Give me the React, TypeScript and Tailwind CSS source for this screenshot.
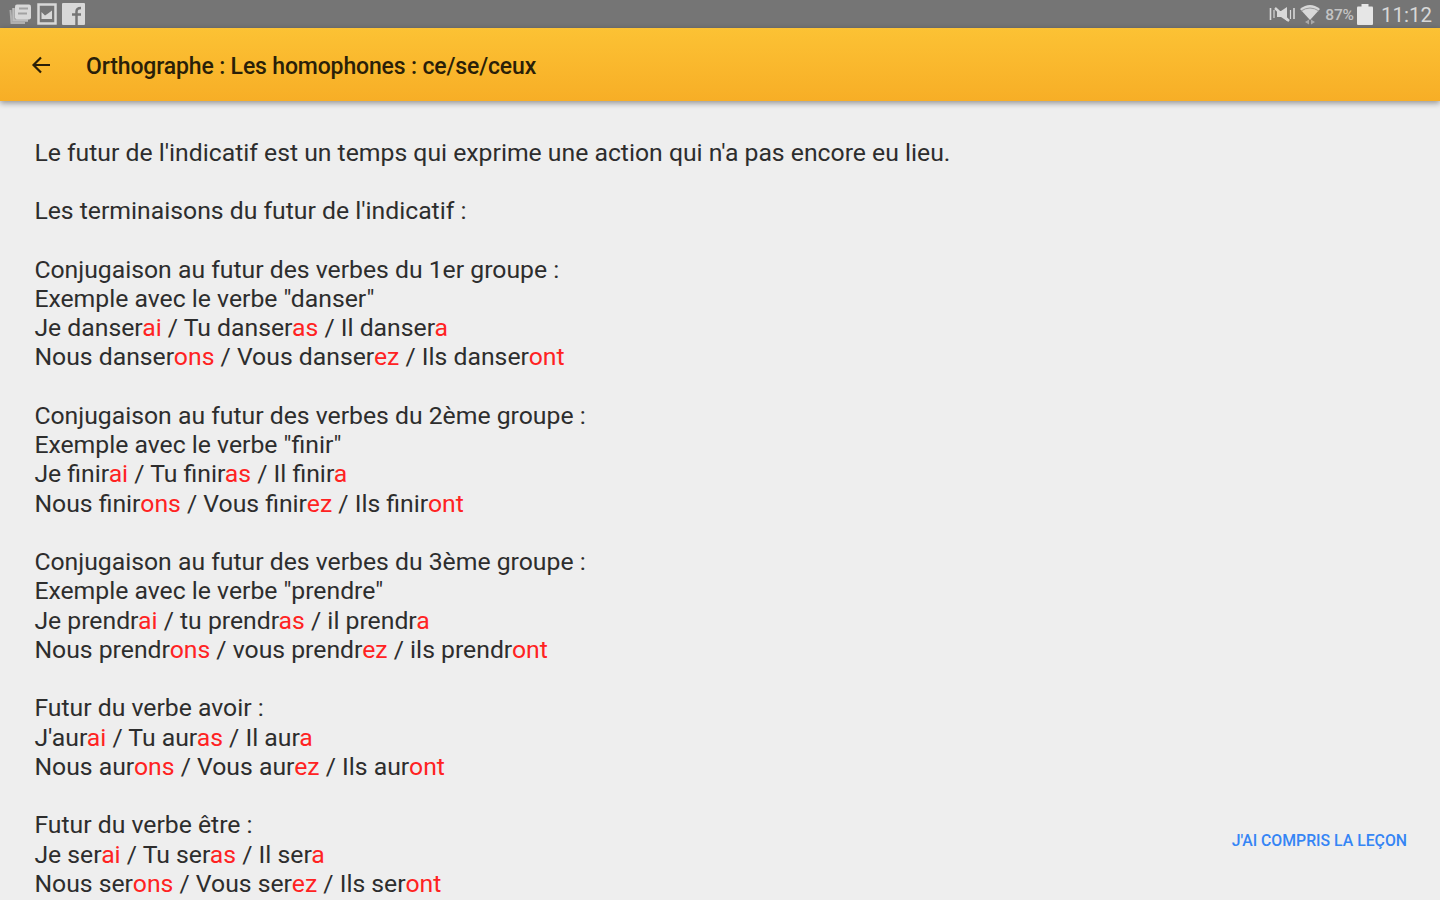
import type { ReactNode } from "react";

type Verb = { title: string; example?: string; rows: [string, string][][] };

const INTRO = [
  "Le futur de l'indicatif est un temps qui exprime une action qui n'a pas encore eu lieu.",
  "Les terminaisons du futur de l'indicatif :",
];

// each form is [stem, ending], the ending is highlighted
const VERBS: Verb[] = [
  {
    title: "Conjugaison au futur des verbes du 1er groupe :",
    example: 'Exemple avec le verbe "danser"',
    rows: [
      [["Je danser", "ai"], ["Tu danser", "as"], ["Il danser", "a"]],
      [["Nous danser", "ons"], ["Vous danser", "ez"], ["Ils danser", "ont"]],
    ],
  },
  {
    title: "Conjugaison au futur des verbes du 2ème groupe :",
    example: 'Exemple avec le verbe "finir"',
    rows: [
      [["Je finir", "ai"], ["Tu finir", "as"], ["Il finir", "a"]],
      [["Nous finir", "ons"], ["Vous finir", "ez"], ["Ils finir", "ont"]],
    ],
  },
  {
    title: "Conjugaison au futur des verbes du 3ème groupe :",
    example: 'Exemple avec le verbe "prendre"',
    rows: [
      [["Je prendr", "ai"], ["tu prendr", "as"], ["il prendr", "a"]],
      [["Nous prendr", "ons"], ["vous prendr", "ez"], ["ils prendr", "ont"]],
    ],
  },
  {
    title: "Futur du verbe avoir :",
    rows: [
      [["J'aur", "ai"], ["Tu aur", "as"], ["Il aur", "a"]],
      [["Nous aur", "ons"], ["Vous aur", "ez"], ["Ils aur", "ont"]],
    ],
  },
  {
    title: "Futur du verbe être :",
    rows: [
      [["Je ser", "ai"], ["Tu ser", "as"], ["Il ser", "a"]],
      [["Nous ser", "ons"], ["Vous ser", "ez"], ["Ils ser", "ont"]],
    ],
  },
];

export default function App() {
  return (
    <div className="relative flex h-[900px] w-[1440px] flex-col overflow-hidden bg-[#eeeeee] font-['Roboto',sans-serif]">
      <StatusBar />
      <header className="z-10 flex h-[72.5px] shrink-0 items-center bg-gradient-to-b from-[#fcc234] to-[#f7ae26] pl-[31px] text-[#2a1f08] shadow-[0_2px_6px_rgba(0,0,0,0.4)]">
        <button aria-label="Retour" className="pt-px">
          <svg width="20" height="20" viewBox="0 0 20 20" fill="none" stroke="currentColor" strokeWidth="2.2">
            <path d="M19 10H3M10 2.5L2.5 10L10 17.5" />
          </svg>
        </button>
        <h1 className="ml-[35px] pt-[5px] text-[23px] font-medium leading-7 tracking-[-0.15px] whitespace-nowrap">
          Orthographe : Les homophones : ce/se/ceux
        </h1>
      </header>

      <main className="flex flex-col gap-[29.25px] pt-[37px] pl-[34.4px] text-[24.76px] leading-[29.25px] whitespace-nowrap text-[#2d2d2d]">
        {INTRO.map((line) => (
          <p key={line}>{line}</p>
        ))}
        {VERBS.map((verb) => (
          <section key={verb.title}>
            <p>{verb.title}</p>
            {verb.example && <p>{verb.example}</p>}
            {verb.rows.map((row, i) => (
              <p key={i}>
                {row.map(([stem, ending], j) => (
                  <span key={stem}>
                    {j > 0 && " / "}
                    {stem}
                    <Ending>{ending}</Ending>
                  </span>
                ))}
              </p>
            ))}
          </section>
        ))}
      </main>

      <button className="absolute right-[33px] bottom-[49px] text-[15.8px] font-medium leading-5 whitespace-nowrap text-[#3585f5]">
        J'AI COMPRIS LA LEÇON
      </button>
    </div>
  );
}

function Ending({ children }: { children: ReactNode }) {
  return <span className="text-[#ff2222]">{children}</span>;
}

function StatusBar() {
  return (
    <div className="flex h-7 shrink-0 items-center justify-between bg-[#757575] pr-[8px] pl-[9px] text-[#d8d8d8]">
      <div className="flex items-center gap-[5px]">
        {/* stacked cards */}
        <svg width="23" height="22" viewBox="0 0 23 22">
          <path d="M1.5 7L2.5 20H16" fill="none" stroke="#b0b0b0" strokeWidth="2" />
          <path d="M4.5 5V17.5H19" fill="none" stroke="#bdbdbd" strokeWidth="2.5" />
          <rect x="6" y="1.5" width="16" height="15" rx="2" fill="currentColor" />
          <path d="M10 5.5H19M9 10.5H18" stroke="#a2a2a2" strokeWidth="1.8" />
        </svg>
        <svg width="20" height="22" viewBox="0 0 20 22">
          <rect x="1.5" y="1.5" width="17" height="19" fill="none" stroke="currentColor" strokeWidth="2.5" />
          <path d="M4.5 16V9L8 12.5L11 10.5L15 7.5V16Z" fill="currentColor" />
        </svg>
        <svg width="23" height="22" viewBox="0 0 23 22">
          <rect width="23" height="22" rx="1" fill="currentColor" />
          <path d="M14.5 22V8.5Q14.5 5 19 5M10 11.5H19" fill="none" stroke="#757575" strokeWidth="2.5" />
        </svg>
      </div>
      <div className="flex items-center whitespace-nowrap">
        {/* vibrate / muted */}
        <svg width="27" height="20" viewBox="0 0 27 20" fill="none" stroke="currentColor">
          <path d="M1.5 4V16M25 4V15" strokeWidth="1.6" />
          <path d="M5 6V14M21.5 6V15" strokeWidth="1.2" />
          <path d="M8 7H12L18 3V17L12 13H8Z" fill="currentColor" stroke="none" />
          <path d="M6 4L20 17" strokeWidth="2.4" />
        </svg>
        <svg className="ml-[4px]" width="20" height="21" viewBox="0 0 20 21">
          <path d="M0 5Q10 -3 20 5L10 16Z" fill="currentColor" />
          <path d="M1 7Q10 1 19 7" fill="none" stroke="#9a9a9a" />
          <path d="M5 18L9 15.5V20.5ZM15 18L11 15.5V20.5Z" fill="#aaaaaa" />
        </svg>
        <span className="ml-[5px] pt-0.5 text-[15.5px] font-medium leading-5 tracking-[-0.1px] text-[#c4c4c4]">87%</span>
        <svg className="ml-[3px]" width="16" height="21" viewBox="0 0 16 21" fill="#e6e6e6">
          <rect x="4.5" width="7" height="4" />
          <rect y="2.5" width="16" height="18.5" rx="1" />
        </svg>
        <span className="ml-[8px] pt-px text-[20.5px] leading-6">11:12</span>
      </div>
    </div>
  );
}
